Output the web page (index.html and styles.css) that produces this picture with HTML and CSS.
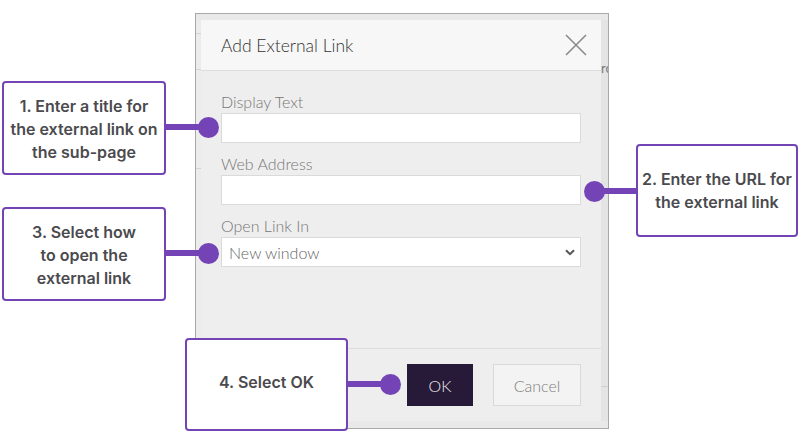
FILE: index.html
```html
<!DOCTYPE html>
<html>
<head>
<meta charset="utf-8">
<link rel="stylesheet" href="styles.css">
</head>
<body>
<div class="stage">
  <div class="shot">
    <div class="bg-left"><span class="bl bl1"></span><span class="bl bl2"></span><span class="bl bl3"></span></div>
    <div class="modal">
      <div class="modal-header">
        <span class="title">Add External Link</span>
        <svg class="close" width="22" height="22" viewBox="0 0 22 22"><path d="M1 1 L21 21 M21 1 L1 21" stroke="#8a8a8a" stroke-width="1.6" fill="none"/></svg>
      </div>
      <div class="modal-body">
        <div class="field">
          <label class="label">Display Text</label>
          <div class="input"></div>
        </div>
        <div class="field">
          <label class="label">Web Address</label>
          <div class="input"></div>
        </div>
        <div class="field">
          <label class="label">Open Link In</label>
          <div class="input select"><span>New window</span>
            <svg width="10" height="7" viewBox="0 0 10 7"><path d="M1 1.2 L5 5.2 L9 1.2" stroke="#555" stroke-width="2" fill="none"/></svg>
          </div>
        </div>
      </div>
      <div class="modal-footer">
        <div class="btn ok">OK</div>
        <div class="btn cancel">Cancel</div>
      </div>
    </div>
    <div class="bg-right"><span class="ro">ro</span><span class="br"></span></div>
  </div>

  <div class="callout c1">1. Enter a title for the external link on the sub-page</div>
  <div class="conn k1"></div>
  <div class="callout c2">2. Enter the URL for the external link</div>
  <div class="conn k2"></div>
  <div class="callout c3">3. Select how to open the external link</div>
  <div class="conn k3"></div>
  <div class="callout c4">4. Select OK</div>
  <div class="conn k4"></div>
</div>
</body>
</html>
```

FILE: styles.css
```css
* { box-sizing: border-box; }
html, body { margin: 0; padding: 0; background: #fff; }
body { width: 801px; height: 433px; overflow: hidden; }

.stage { position: relative; width: 801px; height: 433px; padding: 13px 0 0 195px; }

.shot {
  width: 414px;
  height: 416px;
  border: 1px solid #a9a9a9;
  background: #e9e9e9;
  display: flex;
  padding: 6px 0 7px 0;
}
.bg-left { width: 5px; position: relative; background: #ececec; }
.bl { position: absolute; left: 0; right: 0; height: 1px; background: #d4d4d4; }
.bl1 { top: 13px; }
.bl2 { top: 49px; }
.bl3 { top: 148px; }
.bg-right { width: 7px; position: relative; background: #e4e4e4; overflow: hidden; }
.ro { position: absolute; left: 0; top: 40px; font: 13px "Lato", sans-serif; color: #777; }
.br { position: absolute; left: 0; right: 0; top: 366px; height: 1px; background: #d0d0d0; }

.modal {
  width: 400px;
  display: flex;
  flex-direction: column;
  background: #eeeeee;
  font-family: "Lato", "Liberation Sans", sans-serif;
}
.modal-header {
  height: 51px;
  background: #f7f7f7;
  border-bottom: 1px solid #dcdcdc;
  display: flex;
  align-items: center;
  justify-content: space-between;
  padding: 0 14px 0 20px;
}
.title { font-size: 17.5px; font-weight: 300; color: #333; }
.close { margin-top: -1px; }

.modal-body { flex: 1; padding: 21px 20px 0 20px; }
.field { margin-bottom: 11px; }
.label { display: block; height: 20px; line-height: 20px; font-size: 16px; font-weight: 300; color: #777; margin-bottom: 1px; }
.input { height: 30px; background: #fff; border: 1px solid #dadada; width: 360px; }
.select { display: flex; align-items: center; justify-content: space-between; padding: 0 5px 0 7px; }
.select span { font-size: 16px; font-weight: 300; color: #666; }

.modal-footer {
  height: 73px;
  border-top: 1px solid #dcdcdc;
  display: flex;
  justify-content: flex-end;
  align-items: flex-start;
  gap: 20px;
  padding: 15px 20px 0 0;
}
.btn { height: 42px; display: flex; align-items: center; justify-content: center; font-size: 16px; font-weight: 300; }
.ok { width: 66px; background: #261a38; color: #eeeaf2; }
.cancel { width: 88px; background: #f3f3f3; border: 1px solid #d9d9d9; color: #808080; }

.callout {
  position: absolute;
  background: #fff;
  border: 2px solid #7444b6;
  border-radius: 4px;
  display: flex;
  align-items: center;
  justify-content: center;
  text-align: center;
  font-family: "Inter", "Liberation Sans", sans-serif;
  font-weight: 600;
  font-size: 16px;
  line-height: 23px;
  color: #4b4a4e;
  padding: 0 4px;
}
.c1 { left: 2px; top: 81px; width: 164px; height: 94px; padding-top: 2px; }
.c2 { left: 636px; top: 144px; width: 162px; height: 93px; }
.c3 { left: 2px; top: 207px; width: 164px; height: 94px; padding: 2px 24px 0; }
.c4 { left: 185px; top: 338px; width: 163px; height: 93px; padding-bottom: 4px; }

.conn { position: absolute; height: 6px; background: #7444b6; }
.conn::after {
  content: "";
  position: absolute;
  width: 21px; height: 21px;
  border-radius: 50%;
  background: #7444b6;
  top: -7.5px;
}
.k1 { left: 165px; top: 124px; width: 44px; }
.k1::after { right: -10px; }
.k2 { left: 594px; top: 188px; width: 43px; }
.k2::after { left: -10px; }
.k3 { left: 165px; top: 250px; width: 44px; }
.k3::after { right: -10px; }
.k4 { left: 347px; top: 381px; width: 44px; }
.k4::after { right: -10px; }
```
